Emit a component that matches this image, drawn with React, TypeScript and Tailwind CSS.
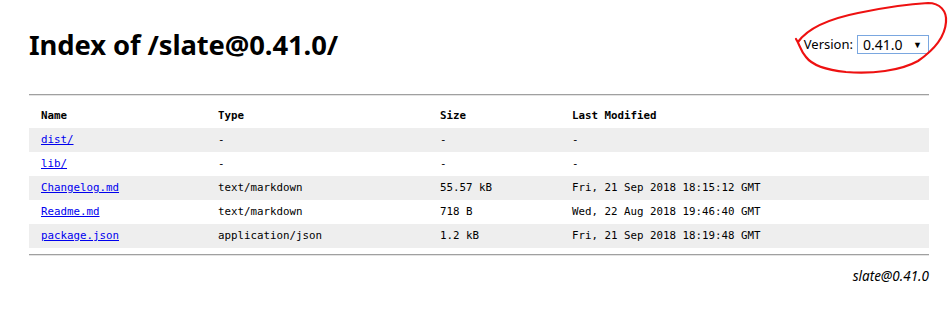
const rows = [
  { name: 'dist/', type: '-', size: '-', modified: '-' },
  { name: 'lib/', type: '-', size: '-', modified: '-' },
  { name: 'Changelog.md', type: 'text/markdown', size: '55.57 kB', modified: 'Fri, 21 Sep 2018 18:15:12 GMT' },
  { name: 'Readme.md', type: 'text/markdown', size: '718 B', modified: 'Wed, 22 Aug 2018 19:46:40 GMT' },
  { name: 'package.json', type: 'application/json', size: '1.2 kB', modified: 'Fri, 21 Sep 2018 18:19:48 GMT' },
]

export default function App() {
  return (
    <div className="relative h-[314px] w-[952px] bg-white text-black" style={{ fontFamily: '"Noto Sans", "Open Sans", sans-serif' }}>
      <div className="ml-[29px] w-[900px]">
        <header className="flex h-[94px] items-start justify-between">
          <h1 className="mt-[25px] text-[27.4px] font-bold leading-[40px] tracking-[-0.1px]">Index of /slate@0.41.0/</h1>
          <div className="mt-[35px] flex items-center gap-[4px] text-[13px]">
            <span>Version:</span>
            <div className="flex h-[19px] w-[72px] items-center justify-between border border-[#7aa7e0] pl-[5px] pr-[6px] text-[14px] leading-none">
              <span>0.41.0</span>
              <span className="text-[9px]">▼</span>
            </div>
          </div>
        </header>
        <div className="h-[2px] border-t border-b border-t-[#a0a0a0] border-b-[#e4e4e4]" />
        <table
          className="mt-[8px] w-full border-collapse text-left text-[10.8px]"
          style={{ fontFamily: '"DejaVu Sans Mono", "Liberation Mono", monospace' }}
        >
          <thead>
            <tr className="h-[24px]">
              <th className="w-[189px] pl-[12px] font-bold">Name</th>
              <th className="w-[222px] font-bold">Type</th>
              <th className="w-[132px] font-bold">Size</th>
              <th className="font-bold">Last Modified</th>
            </tr>
          </thead>
          <tbody>
            {rows.map((r, i) => (
              <tr key={r.name} className={`h-[24px] ${i % 2 === 0 ? 'bg-[#eeeeee]' : 'bg-white'}`}>
                <td className="pl-[12px]">
                  <a href="#" className="text-[#0000ee] underline">{r.name}</a>
                </td>
                <td>{r.type}</td>
                <td>{r.size}</td>
                <td>{r.modified}</td>
              </tr>
            ))}
          </tbody>
        </table>
        <div className="mt-[6px] h-[2px] border-t border-b border-t-[#a0a0a0] border-b-[#e4e4e4]" />
        <p className="mt-[10px] text-right text-[13.5px] italic">slate@0.41.0</p>
      </div>
      <svg className="pointer-events-none absolute left-0 top-0" width="952" height="314" viewBox="0 0 952 314" fill="none">
        <path
          d="M798 42 C808 28 828 19 858 13 C882 8 908 4 928 3 C940 3 947 11 946 22 C945 36 934 50 918 61 C900 71 872 74 846 72 C826 70 812 65 806 57 C800 50 800 45 796 39"
          stroke="#ee1111"
          strokeWidth="2.2"
          strokeLinecap="round"
          strokeLinejoin="round"
        />
      </svg>
    </div>
  )
}
